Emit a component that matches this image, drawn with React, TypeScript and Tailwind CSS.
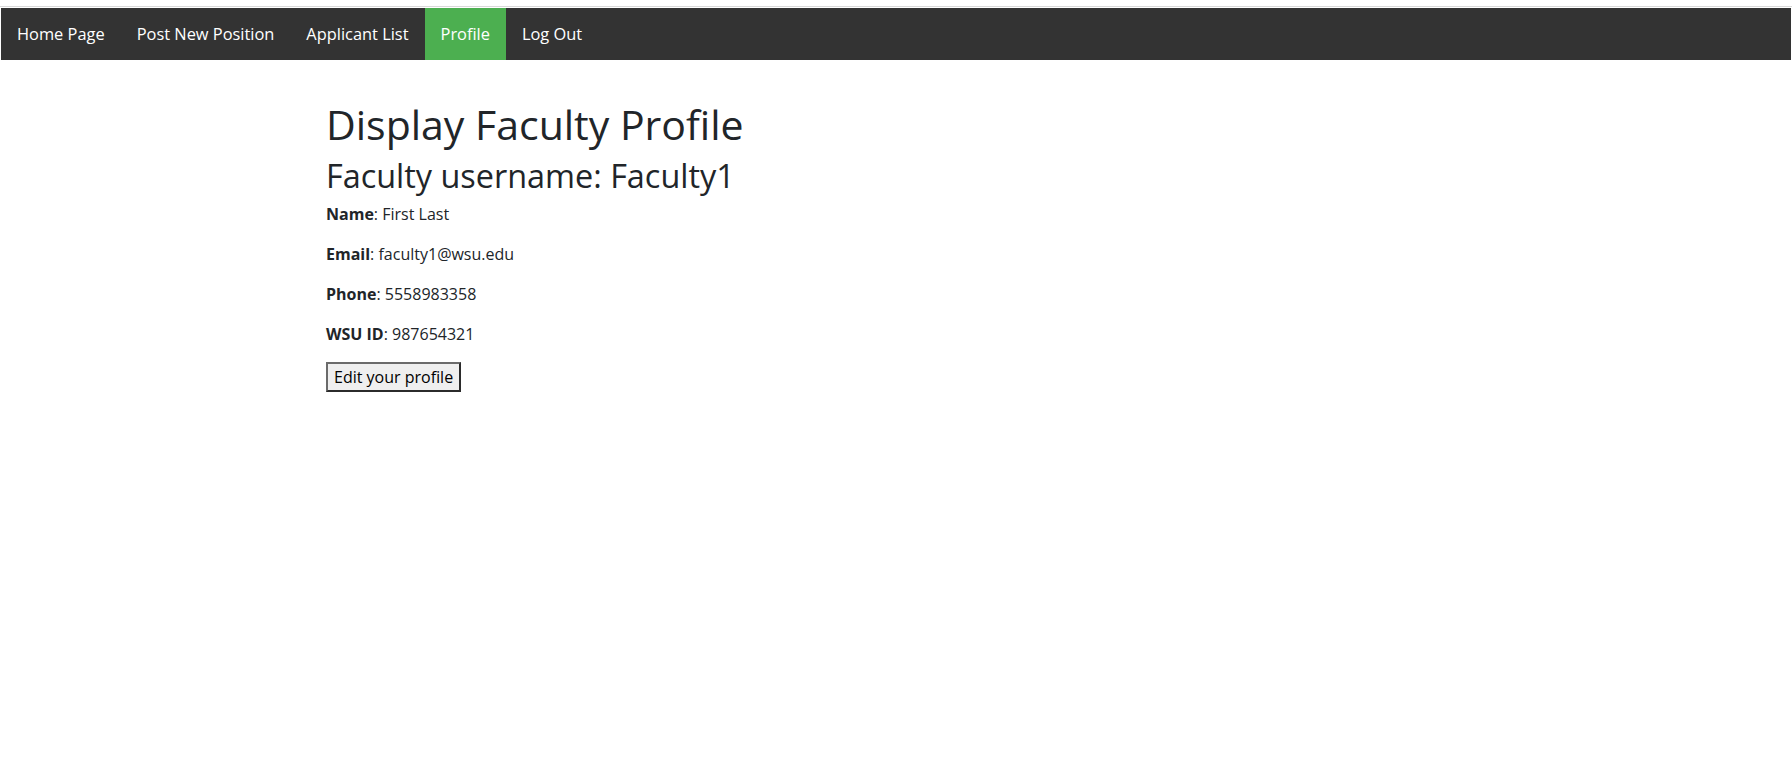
import React from "react";

const navItems = [
  { label: "Home Page" },
  { label: "Post New Position" },
  { label: "Applicant List" },
  { label: "Profile", active: true },
  { label: "Log Out" },
];

const fields = [
  { label: "Name", value: "First Last" },
  { label: "Email", value: "faculty1@wsu.edu" },
  { label: "Phone", value: "5558983358" },
  { label: "WSU ID", value: "987654321" },
];

export default function App() {
  return (
    <div className="min-h-screen bg-white font-['Open_Sans',sans-serif] text-[#212529]">
      <div className="h-[6px]" />
      <div className="h-px bg-[#d9d9d9]" />
      <div className="h-px" />

      {/* Top nav */}
      <nav className="mx-px flex bg-[#333333]">
        {navItems.map((item) => (
          <a
            key={item.label}
            href="#"
            className={
              item.active
                ? "block bg-[#4caf50] px-4 py-[14px] text-[16.4px] leading-6 text-white"
                : "block px-4 py-[14px] text-[16.4px] leading-6 text-white"
            }
          >
            {item.label}
          </a>
        ))}
      </nav>

      <main className="mx-auto w-[1140px] pt-[40px]">
        <h1 className="mb-2 text-[41px] font-normal leading-[48px]">Display Faculty Profile</h1>
        <h2 className="mb-2 text-[32.4px] font-normal leading-[38.4px]">Faculty username: Faculty1</h2>

        {fields.map((f) => (
          <p key={f.label} className="mb-4 text-base leading-6">
            <b className="font-bold">{f.label}</b>: {f.value}
          </p>
        ))}

        <button className="border-2 border-t-[#6b6b6b] border-l-[#6b6b6b] border-r-[#2b2b2b] border-b-[#2b2b2b] bg-[#efefef] px-[6px] py-px text-base leading-6 text-black">
          Edit your profile
        </button>
      </main>
    </div>
  );
}
